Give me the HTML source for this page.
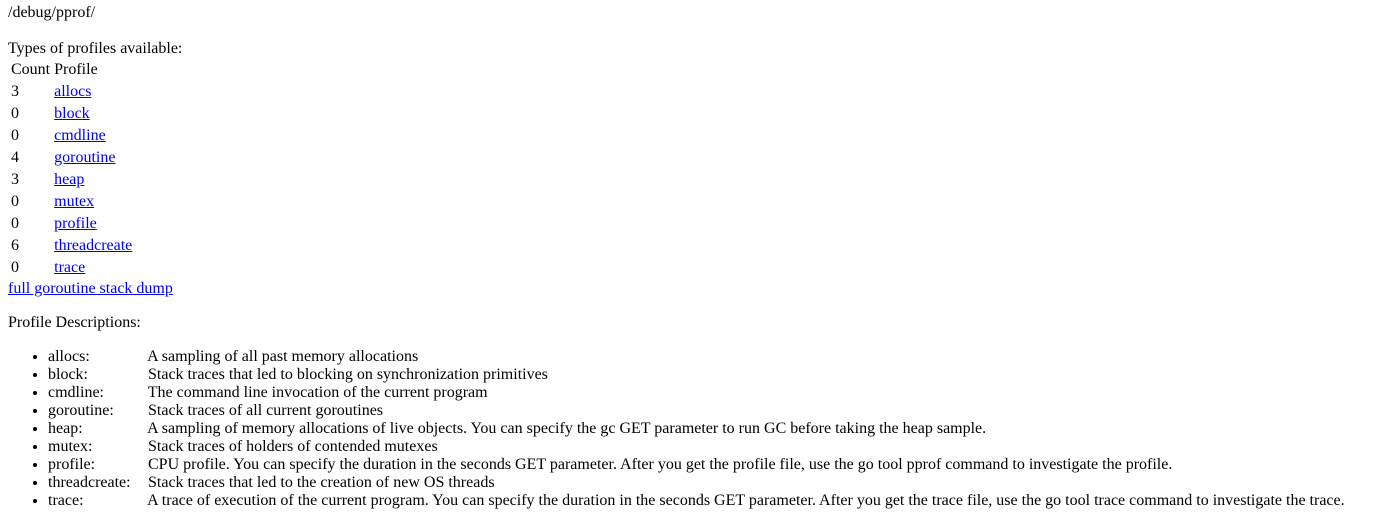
<html>
<head>
<title>/debug/pprof/</title>
<style>
body{font-family:"Liberation Serif",serif;font-size:16px;margin:4px 8px 8px 8px;color:#000;background:#fff;}
a{color:#0000EE;}
.profile-name{display:inline-block;width:6rem;}
</style>
</head>
<body>
/debug/pprof/<br>
<br>
Types of profiles available:
<table>
<thead><td>Count</td><td>Profile</td></thead>
<tr><td>3</td><td><a href="allocs?debug=1">allocs</a></td></tr>
<tr><td>0</td><td><a href="block?debug=1">block</a></td></tr>
<tr><td>0</td><td><a href="cmdline?debug=1">cmdline</a></td></tr>
<tr><td>4</td><td><a href="goroutine?debug=1">goroutine</a></td></tr>
<tr><td>3</td><td><a href="heap?debug=1">heap</a></td></tr>
<tr><td>0</td><td><a href="mutex?debug=1">mutex</a></td></tr>
<tr><td>0</td><td><a href="profile?debug=1">profile</a></td></tr>
<tr><td>6</td><td><a href="threadcreate?debug=1">threadcreate</a></td></tr>
<tr><td>0</td><td><a href="trace?debug=1">trace</a></td></tr>
</table>
<a href="goroutine?debug=2">full goroutine stack dump</a>
<br/>
<p>
Profile Descriptions:
<ul>
<li><div class=profile-name>allocs: </div> A sampling of all past memory allocations</li>
<li><div class=profile-name>block: </div> Stack traces that led to blocking on synchronization primitives</li>
<li><div class=profile-name>cmdline: </div> The command line invocation of the current program</li>
<li><div class=profile-name>goroutine: </div> Stack traces of all current goroutines</li>
<li><div class=profile-name>heap: </div> A sampling of memory allocations of live objects. You can specify the gc GET parameter to run GC before taking the heap sample.</li>
<li><div class=profile-name>mutex: </div> Stack traces of holders of contended mutexes</li>
<li><div class=profile-name>profile: </div> CPU profile. You can specify the duration in the seconds GET parameter. After you get the profile file, use the go tool pprof command to investigate the profile.</li>
<li><div class=profile-name>threadcreate: </div> Stack traces that led to the creation of new OS threads</li>
<li><div class=profile-name>trace: </div> A trace of execution of the current program. You can specify the duration in the seconds GET parameter. After you get the trace file, use the go tool trace command to investigate the trace.</li>
</ul>
</p>
</body>
</html>
